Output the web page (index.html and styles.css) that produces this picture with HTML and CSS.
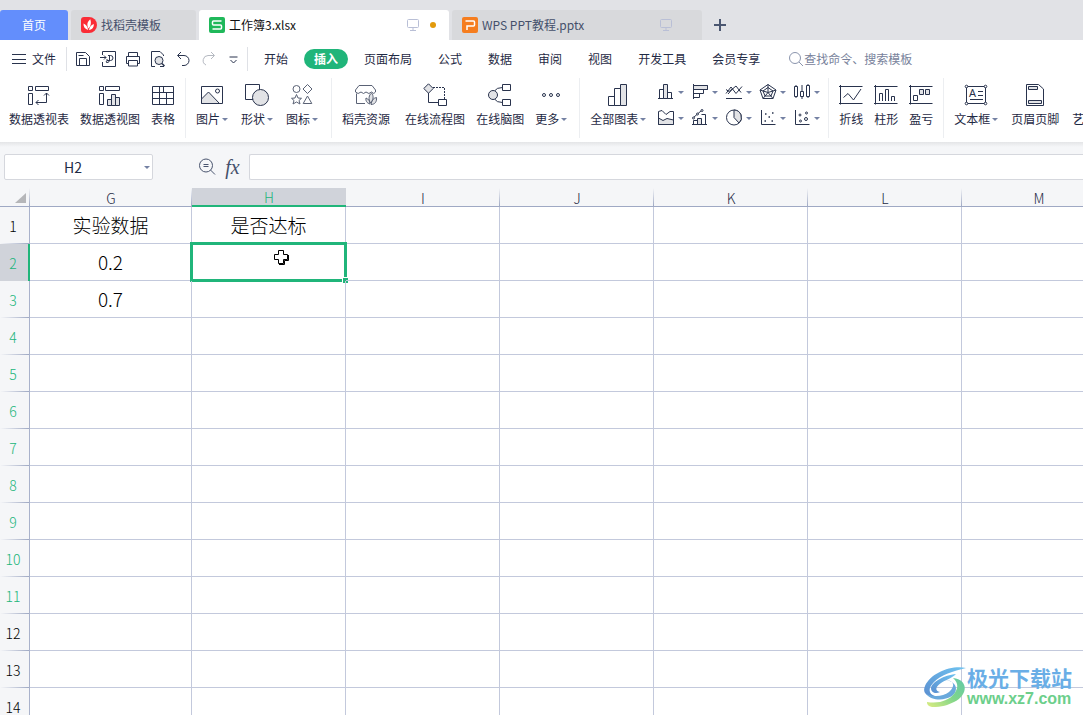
FILE: index.html
```html
<!DOCTYPE html>
<html lang="zh-CN">
<head>
<meta charset="utf-8">
<meta name="viewport" content="width=device-width, initial-scale=1">
<title>工作簿3.xlsx</title>
<link rel="stylesheet" href="styles.css">
</head>
<body>
<div class="app">
  <nav class="tabs" aria-label="文档">
    <button class="tab tab-home">首页</button>
    <button class="tab tab-template">
      <svg class="logo" viewBox="0 0 16 16"><path d="M0 3Q0 0 3 0H8A7.5 7.5 0 0 1 8 16H3Q0 16 0 13Z" fill="#fa2c36"/><path d="M7.2 13C4 12 2.3 10 2.5 6.500C5 7.500 6.500 9 7.200 13ZM7.500 11.500C5.500 8 6.300 4.500 9.300 2.300C10.500 6 10 9 7.500 11.500ZM8 13C8.500 10 10 8 12.800 7C13 10 11.500 12.500 8 13Z" fill="#fff"/></svg>
      <span>找稻壳模板</span>
    </button>
    <button class="tab tab-doc tab-active" aria-current="page">
      <svg class="logo" viewBox="0 0 16 16"><rect width="16" height="16" rx="2" fill="#1fb85a"/><path d="M12.500 4H4.500Q3.500 4 3.500 5V7Q3.500 8 4.500 8H11.500Q12.500 8 12.500 9V11Q12.500 12 11.500 12H3.500" fill="none" stroke="#fff" stroke-width="1.500"/></svg>
      <span class="tab-name">工作簿3.xlsx</span>
      <svg class="screen" viewBox="0 0 12 12"><rect x=".5" y=".5" width="11" height="8" rx="1"/><path d="M6 9V11M3 11.500H9"/></svg>
      <i class="unsaved"></i>
    </button>
    <button class="tab tab-doc tab-ppt">
      <svg class="logo" viewBox="0 0 16 16"><rect width="16" height="16" rx="2" fill="#f57d1f"/><path d="M3.500 4H11.500Q12.500 4 12.500 5V8Q12.500 9 11.500 9H5V13" fill="none" stroke="#fff" stroke-width="1.500"/></svg>
      <span class="tab-name">WPS PPT教程.pptx</span>
      <svg class="screen" viewBox="0 0 12 12"><rect x=".5" y=".5" width="11" height="8" rx="1"/><path d="M6 9V11M3 11.500H9"/></svg>
    </button>
    <button class="tab-add" aria-label="新建"><svg viewBox="0 0 12 12"><path d="M6 0V12M0 6H12" stroke="#4a5670" stroke-width="2"/></svg></button>
  </nav>

  <div class="menubar">
    <button class="file"><svg class="ico16" viewBox="0 0 16 16"><path d="M1 3.500H15M1 8.500H15M1 12.500H15"/></svg><span>文件</span></button>
    <div class="quick">
      <button aria-label="保存"><svg class="ico16" viewBox="0 0 16 16"><path d="M1.500 1.500H10.500L14.500 5.500V14.500H1.500ZM4.500 14V7.500H11.500V14M3.500 4.500H8.500"/></svg></button>
      <button aria-label="输出为PDF"><svg class="ico16" viewBox="0 0 16 16"><path d="M2.500 4V.5H15.500V15.500H2.500V11M0 6.500H6M4 4.500L6 6.500L4 8.500M8 4.500H10.500A2.500 2.500 0 0 1 10.500 9.500H7V8M9.500 5V9.500Q9 12 6.500 11.500Q5.500 10 7.500 9.500"/></svg></button>
      <button aria-label="打印"><svg class="ico16" viewBox="0 0 16 16"><path d="M3.500 5V1.500H12.500V5M3 12.500H1.500V5.500H14.500V12.500H13M3.500 9.500H12.500V15H3.500Z"/></svg></button>
      <button aria-label="打印预览"><svg class="ico16" viewBox="0 0 16 16"><path d="M5 15.500H1.500V.5H10L13.500 4V5M10 15.500H14"/><circle class="fill" cx="9" cy="9.500" r="4"/><path d="M12 12.500L14.500 15" stroke-width="1.500"/></svg></button>
      <button aria-label="撤销"><svg class="ico16" viewBox="0 0 16 16"><path d="M6 1L2.500 4.500L6 8M3 4.500H9A5 5 0 0 1 9 14.500H7"/></svg></button>
      <button class="muted" aria-label="恢复"><svg class="ico16" viewBox="0 0 16 16"><path d="M11 1L14.500 4.500L11 8M14 4.500H8A5 5 0 0 0 6 14"/></svg></button>
      <button aria-label="自定义"><svg class="ico16" viewBox="0 0 16 16"><path d="M4.500 6H12.500M5.500 9L8.500 12L11.500 9"/></svg></button>
    </div>
    <div class="menus">
      <button>开始</button><button class="menu-active">插入</button><button>页面布局</button><button>公式</button><button>数据</button><button>审阅</button><button>视图</button><button>开发工具</button><button>会员专享</button>
    </div>
    <label class="search"><svg class="ico16" viewBox="0 0 16 16"><circle cx="7" cy="7" r="5.500"/><path d="M11 11L15 15"/></svg><input type="text" placeholder="查找命令、搜索模板" aria-label="查找命令、搜索模板"></label>
  </div>

  <div class="ribbon">
    <div class="group group-first">
      <button class="tool"><svg viewBox="0 0 24 24"><path d="M1.500 3.500H5.500V7.500H1.500ZM8.500 3.500H21.500V7.500H8.500ZM1.500 10.500H5.500V21.500H1.500ZM19.500 10V19.500H9M17 12.500L19.500 10L22 12.500M11.500 17L9 19.500L11.500 22"/></svg><span>数据透视表</span></button>
      <button class="tool"><svg viewBox="0 0 24 24"><path d="M1.500 3.500H5.500V7.500H1.500ZM7.500 3.500H21.500V7.500H7.500ZM1.500 10.500H5.500V21.500H1.500Z"/><path class="fill" d="M9.500 16.500H13.500V22.500H9.500ZM13.500 11.500H17.500V22.500H13.500ZM17.500 14.500H21.500V22.500H17.500Z"/></svg><span>数据透视图</span></button>
      <button class="tool"><svg viewBox="0 0 24 24"><path d="M1.500 3.500H22.500V21.500H1.500ZM1.500 9.500H22.500M1.500 15.500H22.500M8.500 3.500V21.500M15.500 9.500V21.500M12.500 3.500V9.500"/></svg><span>表格</span></button>
    </div>
    <div class="group group-wide">
      <button class="tool"><svg viewBox="0 0 24 24"><path d="M1.500 3.500H22.500V20.500H1.500Z"/><path class="fill" d="M1.500 16L8.500 9L19.500 20.500H1.500Z"/><circle cx="17.500" cy="8" r="2"/></svg><span class="more">图片</span></button>
      <button class="tool"><svg viewBox="0 0 24 24"><path d="M.5 1.500H14.500V16.500H.5Z"/><circle class="fill" cx="15.500" cy="14.500" r="8"/></svg><span class="more">形状</span></button>
      <button class="tool"><svg class="thin" viewBox="0 0 24 24"><circle cx="6.500" cy="6" r="3.500"/><path d="M17.500 1.500L22 6L17.500 10.500L13 6ZM6.500 11.500L8 15L11.500 15.300L9 17.500L10 21L6.500 19L3 21L4 17.500L1.500 15.300L5 15ZM17.500 13L21.800 20.500H13.200Z"/></svg><span class="more">图标</span></button>
    </div>
    <div class="group group-online">
      <button class="tool tool-docer"><svg class="thin" viewBox="0 0 24 24"><path d="M5 2.500H18L21.500 7V9Q20 12 17.500 9Q15 12 12 9Q9.500 12 7 9Q4 12 1.500 9V7ZM2.500 10.500V20.500H11"/><path class="fill" d="M16 21C12.500 20 11.500 17.500 12 15C14.500 16 16 18 16 21ZM16.500 20C14 16 15 12 17.500 10C20 13 19.500 17 16.500 20ZM17 21.500C17.500 17.500 19.500 15 22.500 14.500C23 18.500 21 21.500 17 21.500Z"/></svg><span>稻壳资源</span></button>
      <button class="tool"><svg viewBox="0 0 24 24"><path class="fill" d="M5.500 .8L10.200 5.500L5.500 10.200L.8 5.500Z"/><path d="M5.500 10V19.500H15.500M15.500 16.500H23.500V22.500H15.500Z"/><path d="M10 4.500H21.500V16" stroke-dasharray="2 1"/></svg><span>在线流程图</span></button>
      <button class="tool"><svg viewBox="0 0 24 24"><path d="M14.500 1.500H22.500V7.500H14.500ZM14.500 16.500H22.500V22.500H14.500ZM6.500 8Q8.500 4.500 14.500 4.500M6.500 16Q8.500 19.500 14.500 19.500"/><circle class="fill" cx="5" cy="12" r="4.500"/></svg><span>在线脑图</span></button>
      <button class="tool"><svg viewBox="0 0 24 24"><circle cx="5" cy="12" r="1.500"/><circle cx="12" cy="12" r="1.500"/><circle cx="19" cy="12" r="1.500"/></svg><span class="more">更多</span></button>
    </div>
    <div class="group group-charts">
      <button class="tool"><svg viewBox="0 0 24 24"><path d="M2.500 13.500H8.500V22.500H2.500ZM8.500 5.500H14.500V22.500H8.500Z"/><path class="fill" d="M14.500 1.500H20.500V22.500H14.500Z"/></svg><span class="more">全部图表</span></button>
      <div class="chart-grid">
        <button class="mini more" aria-label="柱形图"><svg viewBox="0 0 18 18"><path d="M2.500 6.500H6.500V15.500M10.500 9.500H14.500V15.500M2.500 6.500V15.500M1 15.500H16"/><path class="fill" d="M6.500 1.500H10.500V15.500H6.500Z"/></svg></button>
        <button class="mini more" aria-label="条形图"><svg viewBox="0 0 18 18"><path d="M2.500 1V16M2.500 2.500H16.500V6.500H2.500M2.500 10.500H8.500V14.500H2.500"/><path class="fill" d="M2.500 2.500H16.500V6.500H2.500Z"/><path d="M2.500 6.500H12.500V10.500H2.500Z"/></svg></button>
        <button class="mini more" aria-label="折线图"><svg viewBox="0 0 18 18"><path d="M1 15.500H17M1 10.500L6 4L11 10.500L17 3.500M1 6.500L4 8.500L8 5.500L11 3L16 9.500M3 11L8 5.500"/></svg></button>
        <button class="mini more" aria-label="雷达图"><svg viewBox="0 0 18 18"><path d="M9 1.500L17 7L14 15.500H4L1 7ZM9 4.500L14 8L12 13H6L4 8ZM9 1.500V9M17 7L9 9.500L14 15.500M1 7L9 9.500L4 15.500"/></svg></button>
        <button class="mini more" aria-label="股价图"><svg viewBox="0 0 18 18"><path d="M1.500 3.500H4.500V13.500H1.500ZM7.500 8.500H10.500V13.500H7.500ZM13.500 2.500H16.500V13.500H13.500ZM3 2V4M3 14V15M9 2V8M9 14V16M15 1V2M15 14V15"/></svg></button>
        <button class="mini more" aria-label="面积图"><svg viewBox="0 0 18 18"><path d="M1.500 2.500L5 1.500L9 5.500L13 2.500H16.500V15.500H1.500Z"/><path class="fill" d="M1.500 9L6 11.500L10 9.500L16.500 11V15.500H1.500Z"/></svg></button>
        <button class="mini more" aria-label="组合图"><svg viewBox="0 0 18 18"><path d="M1 15.500H16M2.500 11.500H6.500V15.500M2.500 11.500V15.500M10.500 5.500H14.500V15.500H10.500M2.500 8.500L10.500 1.500"/><path class="fill" d="M6.500 9.500H10.500V15.500H6.500Z"/><g fill="#fff"><circle cx="2.500" cy="9" r="1"/><circle cx="6.500" cy="5" r="1"/><circle cx="11" cy="1.500" r="1"/></g></svg></button>
        <button class="mini more" aria-label="饼图"><svg viewBox="0 0 18 18"><circle cx="9" cy="8.500" r="7.500"/><path class="fill" d="M9 1A7.500 7.500 0 0 1 14 14L9 8.500Z"/></svg></button>
        <button class="mini more" aria-label="散点图"><svg viewBox="0 0 18 18"><path d="M2.500 1V15.500H16.500"/><path stroke-width="1.500" d="M6 5H7.500M9.500 8H11M13 4H14.500M5.500 12H7M12.500 12H14"/></svg></button>
        <button class="mini more" aria-label="气泡图"><svg viewBox="0 0 18 18"><path d="M2.500 1V15.500H16.500"/><circle cx="7" cy="6" r="1"/><circle cx="13.500" cy="4" r="1"/><circle cx="7.500" cy="12" r="1"/><circle cx="13" cy="10" r="1.500"/></svg></button>
      </div>
    </div>
    <div class="group">
      <button class="tool"><svg viewBox="0 0 24 24"><path d="M23.500 3.500H0M1.500 2V21.500M0 20.500H23.500"/><path d="M4.500 14.500L9 10.500L14.500 17L22 6"/></svg><span>折线</span></button>
      <button class="tool"><svg viewBox="0 0 24 24"><path d="M23.500 3.500H0M1.500 2V21.500M0 20.500H23.500M5.500 18V10.500H8.500V18M11.500 18V6.500H14.500V18M17.500 18V13.500H20.500V18"/></svg><span>柱形</span></button>
      <button class="tool"><svg viewBox="0 0 24 24"><path d="M23.500 3.500H0M1.500 2V21.500M0 20.500H23.500M4.500 12.500H8.500V17.500H4.500Z"/><path class="fill" d="M10.500 6.500H14.500V11.500H10.500ZM16.500 6.500H20.500V11.500H16.500Z"/></svg><span>盈亏</span></button>
    </div>
    <div class="group group-text">
      <button class="tool"><svg viewBox="0 0 24 24"><path d="M2.500 3.500H21.500V20.500H2.500ZM14 8.500H19M14 12.500H19M6 16.500H19"/><g fill="#fff"><circle cx="2.500" cy="3.500" r="1.300"/><circle cx="21.500" cy="3.500" r="1.300"/><circle cx="2.500" cy="20.500" r="1.300"/><circle cx="21.500" cy="20.500" r="1.300"/></g><text class="glyph" x="5" y="14">A</text></svg><span class="more">文本框</span></button>
      <button class="tool"><svg viewBox="0 0 24 24"><path d="M3.500 1.500H15.500L20.500 6V22.500H3.500Z"/><path class="fill" d="M5.500 3.500H14.500V6.500H5.500ZM5.500 17.500H18.500V20.500H5.500Z"/></svg><span>页眉页脚</span></button>
      <button class="tool tool-last"><svg viewBox="0 0 24 24"><path d="M4.500 17L10.500 3L17 17M7 12.500H14"/></svg><span class="more">艺术字</span></button>
    </div>
  </div>

  <div class="formula">
    <div class="namebox"><input type="text" value="H2" aria-label="名称框"><button aria-label="名称列表"></button></div>
    <button class="lens" aria-label="查看公式"><svg viewBox="0 0 18 18"><circle cx="8" cy="7.500" r="6.500"/><path d="M12.500 12L17 16.500M5.500 6.500H10.500M5.500 8.500H10.500"/></svg></button>
    <button class="fx" aria-label="插入函数">fx</button>
    <input class="formula-input" type="text" aria-label="编辑栏">
  </div>

  <main class="sheet">
    <table>
      <colgroup><col class="c-head"><col class="c-g"><col><col><col><col><col><col></colgroup>
      <thead><tr><th class="corner"><i></i></th><th>G</th><th class="col-on">H</th><th>I</th><th>J</th><th>K</th><th>L</th><th>M</th></tr></thead>
      <tbody>
        <tr><th>1</th><td>实验数据</td><td>是否达标</td><td></td><td></td><td></td><td></td><td></td></tr>
        <tr class="row-on"><th>2</th><td>0.2</td><td class="selected"><i class="handle"></i><svg class="cursor" viewBox="0 0 16 16"><path d="M5.500 1.500H10.500V5.500H14.500V10.500H10.500V14.500H5.500V10.500H1.500V5.500H5.500Z" fill="#fff" stroke="#000"/><path d="M6 15.500H11.500V11.500H15.500V6" fill="none" stroke="#000"/></svg></td><td></td><td></td><td></td><td></td><td></td></tr>
        <tr class="filtered"><th>3</th><td>0.7</td><td></td><td></td><td></td><td></td><td></td><td></td></tr>
        <tr class="filtered"><th>4</th><td></td><td></td><td></td><td></td><td></td><td></td><td></td></tr>
        <tr class="filtered"><th>5</th><td></td><td></td><td></td><td></td><td></td><td></td><td></td></tr>
        <tr class="filtered"><th>6</th><td></td><td></td><td></td><td></td><td></td><td></td><td></td></tr>
        <tr class="filtered"><th>7</th><td></td><td></td><td></td><td></td><td></td><td></td><td></td></tr>
        <tr class="filtered"><th>8</th><td></td><td></td><td></td><td></td><td></td><td></td><td></td></tr>
        <tr class="filtered"><th>9</th><td></td><td></td><td></td><td></td><td></td><td></td><td></td></tr>
        <tr class="filtered"><th>10</th><td></td><td></td><td></td><td></td><td></td><td></td><td></td></tr>
        <tr class="filtered"><th>11</th><td></td><td></td><td></td><td></td><td></td><td></td><td></td></tr>
        <tr><th>12</th><td></td><td></td><td></td><td></td><td></td><td></td><td></td></tr>
        <tr><th>13</th><td></td><td></td><td></td><td></td><td></td><td></td><td></td></tr>
        <tr><th>14</th><td></td><td></td><td></td><td></td><td></td><td></td><td></td></tr>
      </tbody>
    </table>
  </main>

  <div class="watermark">
    <svg viewBox="0 0 44 42"><defs><linearGradient id="blue" x1="0" y1="1" x2="1" y2="0"><stop offset="0" stop-color="#5b8fd0"/><stop offset="1" stop-color="#6fc3f0"/></linearGradient><linearGradient id="green" x1="0" y1="1" x2="1" y2="0"><stop offset="0" stop-color="#dcec80"/><stop offset=".5" stop-color="#7fd58a"/><stop offset="1" stop-color="#62c9a8"/></linearGradient></defs>
      <path d="M43 2C28-1 8 7 2 20C-1 27 4 31 12 30C5 28 5 22 11 16C18 9 30 5 43 2Z" fill="url(#blue)"/>
      <path d="M33 8C21 9 9 16 8 22C8 27 13 28 17 26C12 25 12 21 18 17C22 14 28 13 33 8Z" fill="url(#blue)"/>
      <path d="M22 14C31 14 33 20 26 26C20 31 10 31 3 28C9 35 21 35 29 30C36 25 34 15 22 14Z" fill="#6aa9dc"/>
      <path d="M30 12C46 14 45 29 31 36C25 39 19 41 9 41C4 40 4 37 4 36C17 38 26 34 31 28C35 23 36 17 30 12Z" fill="url(#green)"/></svg>
    <div><strong>极光下载站</strong><span>www.xz7.com</span></div>
  </div>
</div>
</body>
</html>
```
FILE: styles.css
```css
* { box-sizing: border-box; }
body {
  margin: 0;
  font-family: "Noto Sans CJK SC", "Noto Sans", sans-serif;
  font-size: 12px;
  line-height: 16px;
  color: #1f2a44;
}
button, input {
  font: inherit;
  color: inherit;
  border: 0;
  padding: 0;
  margin: 0;
  background: none;
}
button { white-space: nowrap; flex: none; }
svg { display: block; flex: none; fill: none; stroke: #29334d; }
.app {
  position: relative;
  display: flex;
  flex-direction: column;
  height: 100vh;
  overflow: hidden;
  background: #fff;
}

/* Document tabs */
.tabs {
  display: flex;
  flex: none;
  gap: 3px;
  padding-top: 10px;
  height: 40px;
  background: #e1e2e6;
}
.tab {
  display: flex;
  align-items: center;
  gap: 4px;
  padding: 0 10px;
  border-radius: 3px 3px 0 0;
  background: #d8d9dc;
  color: #45506b;
  text-align: left;
}
.tab-home { width: 68px; justify-content: center; background: #638efc; color: #fff; }
.tab-template { width: 125px; }
.tab-doc { width: 250px; }
.tab-active { background: #fff; color: #111; }
.tab-name { flex: 1; }
.logo { width: 16px; height: 16px; stroke: none; }
.screen { width: 12px; height: 12px; stroke: #b9bfd6; }
.tab-active .unsaved { width: 6px; height: 6px; margin: 0 3px 0 7px; border-radius: 50%; background: #e29a0c; }
.tab-ppt .screen { margin-right: 20px; }
.tab-add { padding: 0 9px; }
.tab-add svg { width: 12px; height: 12px; }

/* Menu bar */
.menubar { display: flex; flex: none; align-items: center; height: 38px; }
.ico16 { width: 16px; height: 16px; }
.file { display: flex; align-items: center; gap: 5px; padding: 0 10px 0 11px; }
.quick {
  display: flex;
  gap: 9px;
  padding: 4px 6px 4px 8px;
  border: solid #dfe1e6;
  border-width: 0 1px;
}
.muted svg { stroke: #b5b9c1; }
.menus { display: flex; gap: 6px; padding-left: 6px; }
.menus button { height: 20px; padding: 0 10px; border-radius: 10px; }
.menus .menu-active { background: #20b57a; color: #fff; font-weight: 700; }
.search { display: flex; align-items: center; flex: 1; padding-left: 18px; color: #78829b; }
.search svg { stroke: #8b95ad; }
.search input { width: 100%; min-width: 0; outline: 0; }
.search input::placeholder { color: #78829b; opacity: 1; }

/* Ribbon */
.ribbon {
  display: flex;
  flex: none;
  height: 64px;
  overflow: hidden;
}
.group {
  display: flex;
  flex: none;
  gap: 11px;
  height: 60px;
  padding: 5px 10px 0;
  border-right: 1px solid #eceef1;
}
.group-first { padding-left: 9px; }
.group-wide { gap: 13px; padding-right: 13px; }
.group-online { padding-right: 12px; }
.tool-docer { margin-right: 4px; }
.group-charts { padding-right: 1px; }
.group-text { gap: 13px; border: 0; }
.tool {
  display: flex;
  flex-direction: column;
  align-items: center;
  gap: 4px;
}
.tool svg { width: 24px; height: 24px; }
.thin { stroke: #5a6275; }
.fill { fill: #e2e3e6; }
.glyph { font: 11px "Noto Sans", sans-serif; fill: #29334d; stroke: none; }
.more { display: flex; align-items: center; gap: 2px; }
.more::after {
  content: "";
  border: 3px solid transparent;
  border-top-color: #7481a3;
  border-bottom: 0;
}
.chart-grid {
  display: grid;
  grid-template: 26px 26px / repeat(5, 34px);
  margin-top: -4px;
}
.mini { gap: 3px; }
.mini svg { width: 18px; height: 18px; }

/* Formula bar */
.formula {
  display: flex;
  flex: none;
  align-items: center;
  height: 46px;
  padding: 4px 0 0 4px;
  background: linear-gradient(#e4e5e7, #f5f6f8 5px);
}
.namebox, .formula-input {
  height: 26px;
  border: 1px solid #d5d7dd;
  border-radius: 2px;
  background: #fff;
}
.namebox { display: flex; align-items: center; width: 149px; }
.namebox input { width: 136px; text-align: center; font-size: 14px; outline: 0; }
.namebox button { border: 3px solid transparent; border-top-color: #7481a3; border-bottom: 0; margin-left: 3px; }
.lens { margin-left: 45px; }
.lens svg { width: 18px; height: 18px; stroke: #4a556f; }
.fx {
  width: 33px;
  font: italic 20px/20px "Liberation Serif", serif;
  color: #45506b;
}
.formula-input { flex: 1; min-width: 0; border-right: 0; border-radius: 2px 0 0 2px; }

/* Sheet */
.sheet { flex: 1; min-height: 0; overflow: hidden; }
table { width: 1116px; table-layout: fixed; border-collapse: separate; border-spacing: 0; }
col { width: 154px; }
.c-head { width: 30px; }
.c-g { width: 162px; }
th, td { padding: 0; text-align: center; font-weight: 300; }
thead th {
  height: 19px;
  padding-top: 2px;
  font-size: 14px;
  line-height: 16px;
  border-bottom: 1px solid #9fa9c4;
  background: linear-gradient(transparent, #9fa9c4) right / 1px 100% no-repeat #f5f6f8;
}
thead .col-on { padding-top: 1px; color: #20b57a; background: #d0d3da; border-bottom: 2px solid #20b57a; }
.corner i {
  display: block;
  margin-left: 15px;
  border: solid transparent;
  border-width: 0 0 10px 11px;
  border-bottom-color: #b5b6b9;
  width: 0;
}
tbody th {
  height: 37px;
  padding-right: 3px;
  font-size: 14px;
  color: #000;
  border-right: 1px solid #a9b2cb;
  background: linear-gradient(90deg, transparent, #9fa9c4) bottom / 100% 1px no-repeat #f5f6f8;
}
td {
  position: relative;
  font-size: 19px;
  line-height: 24px;
  color: #000;
  border: solid #c3c9dc;
  border-width: 0 1px 1px 0;
}
.row-on th, .filtered th { color: #20b57a; }
.row-on th { padding-right: 2px; background: #d0d3da; border-right: 2px solid #20b57a; }
.selected::before {
  content: "";
  position: absolute;
  inset: -2px;
  border: 3px solid #20b57a;
}
.handle {
  position: absolute;
  right: -3px;
  bottom: -3px;
  width: 6px;
  height: 6px;
  background: #20b57a;
  border: solid #fff;
  border-width: 1px 0 0 1px;
}
.cursor { position: absolute; left: 81px; top: 5px; width: 16px; height: 16px; }

/* Site mark over the sheet */
.watermark {
  position: absolute;
  right: 11px;
  bottom: 7px;
  display: flex;
  align-items: center;
}
.watermark svg { width: 44px; height: 42px; stroke: none; }
.watermark strong, .watermark span { display: block; }
.watermark strong { padding-bottom: 2px; font-size: 21px; line-height: 22px; color: #6aaee6; }
.watermark span { font: 700 16px/18px "Liberation Sans", sans-serif; color: #6ccf8b; }
```
